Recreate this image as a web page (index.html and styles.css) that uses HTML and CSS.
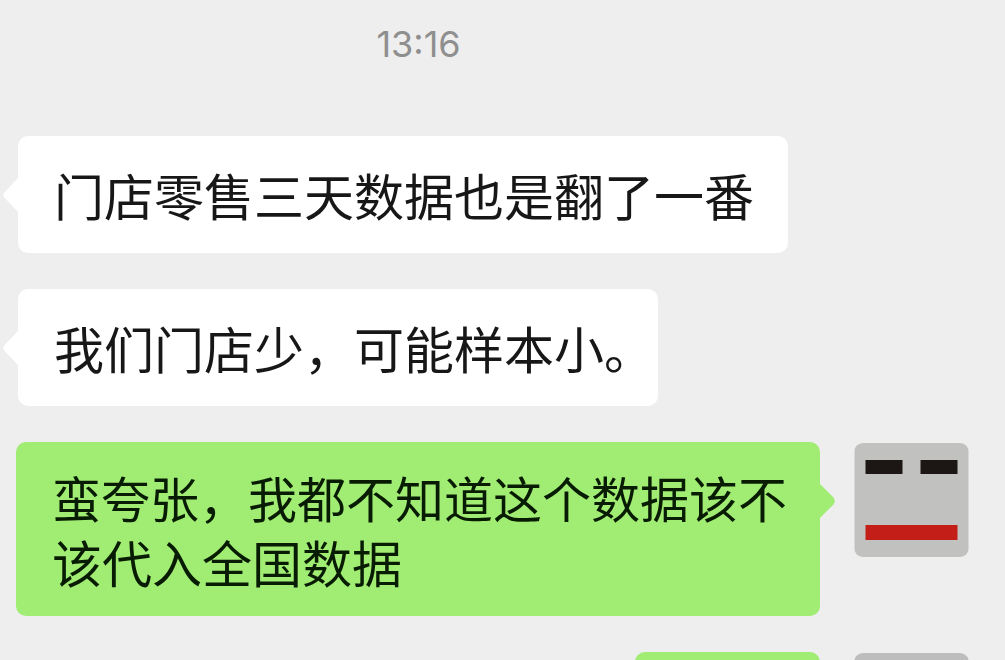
FILE: index.html
```html
<!DOCTYPE html>
<html lang="zh-CN">
<head>
<meta charset="utf-8">
<meta name="viewport" content="width=device-width, initial-scale=1">
<title>聊天</title>
<link rel="stylesheet" href="styles.css">
</head>
<body>
<main class="chat">
  <time class="chat-time" datetime="13:16">13:16</time>
  <section class="messages">
    <div class="message received"><p class="bubble">门店零售三天数据也是翻了一番</p></div>
    <div class="message received"><p class="bubble ends-with-stop">我们门店少，可能样本小。</p></div>
    <div class="message sent">
      <p class="bubble">蛮夸张，我都不知道这个数据该不该代入全国数据</p>
      <svg class="avatar" viewBox="0 0 114 114" aria-hidden="true">
        <rect width="114" height="114" fill="#c1c2c0"/>
        <rect x="11" y="17" width="37" height="14" fill="#1c1714"/>
        <rect x="66" y="17" width="37" height="14" fill="#1c1714"/>
        <rect x="11" y="82" width="92" height="15" fill="#c31f18"/>
      </svg>
    </div>
    <div class="message sent">
      <p class="bubble short"></p>
      <svg class="avatar" viewBox="0 0 114 114" aria-hidden="true">
        <rect width="114" height="114" fill="#bdbdbd"/>
        <rect x="11" y="17" width="37" height="14" fill="#1c1714"/>
        <rect x="66" y="17" width="37" height="14" fill="#1c1714"/>
        <rect x="11" y="82" width="92" height="15" fill="#c31f18"/>
      </svg>
    </div>
  </section>
</main>
</body>
</html>
```
FILE: styles.css
```css
* { box-sizing: border-box; }

body {
  margin: 0;
  background: #eeeeee;
  color: #171717;
  font-family: "Noto Sans CJK SC", sans-serif;
}

.chat {
  height: 100vh;
  overflow: hidden;
  padding: 20px 36px 0 16px;
}

.chat-time {
  display: block;
  margin-bottom: 68px;
  padding-right: 148px;
  color: #8f8f8f;
  font-family: Inter, sans-serif;
  font-size: 36px;
  line-height: 48px;
  text-align: center;
}

.messages {
  display: flex;
  flex-direction: column;
  gap: 36px;
}

.message {
  display: flex;
  align-items: flex-start;
}

.received { padding-left: 2px; }

.sent {
  justify-content: flex-end;
  gap: 34px;
}

.bubble {
  position: relative;
  min-height: 117px;
  margin: 0;
  padding: 26px 34px 27px 36px;
  border-radius: 10px;
  font-size: 50px;
  line-height: 64px;
}

.received .bubble { background: #ffffff; }

/* The full stop's own blank half takes the place of the side padding. */
.received .ends-with-stop { padding-right: 4px; }

.sent .bubble {
  padding-top: 23px;
  padding-bottom: 23px;
  background: #a1ec73;
  color: #081c04;
}

.sent .bubble::first-line { font-size: 49px; }

.sent .bubble:not(.short) { padding-right: 30px; }

.sent .short { width: 185px; }

.bubble::before {
  content: "";
  position: absolute;
  top: 42px;
  width: 15px;
  height: 34px;
}

.received .bubble::before {
  right: 100%;
  background: #ffffff;
  clip-path: polygon(100% 0, 10% 42%, 0 50%, 10% 58%, 100% 100%);
}

.sent .bubble::before {
  left: 100%;
  background: #a1ec73;
  clip-path: polygon(0 0, 90% 40%, 100% 50%, 90% 60%, 0 100%);
}

.avatar {
  flex: none;
  width: 115px;
  height: 114px;
  margin-top: 1px;
  border-radius: 9px;
}
```
